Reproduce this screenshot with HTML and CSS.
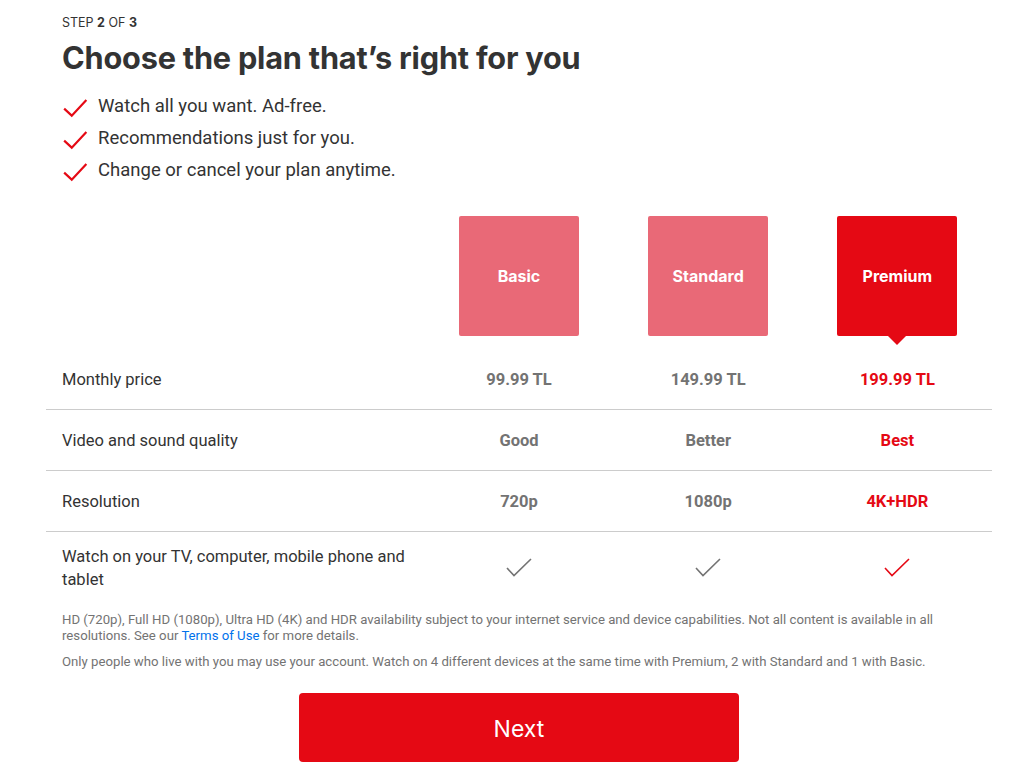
FILE: index.html
```html
<!DOCTYPE html>
<html lang="en">
<head>
<meta charset="utf-8">
<title>Choose your plan</title>
<link rel="stylesheet" href="styles.css">
</head>
<body>
<main class="page">
  <header class="intro">
    <div class="step">STEP <b>2</b> OF <b>3</b></div>
    <h1 class="title">Choose the plan that’s right for you</h1>
    <ul class="perks">
      <li class="perk"><svg class="perk-check" viewBox="0 0 24 24" width="26" height="26"><path d="M2 13.5 L9 20 L22.5 5.5" fill="none" stroke="#e50914" stroke-width="2"/></svg><span>Watch all you want. Ad-free.</span></li>
      <li class="perk"><svg class="perk-check" viewBox="0 0 24 24" width="26" height="26"><path d="M2 13.5 L9 20 L22.5 5.5" fill="none" stroke="#e50914" stroke-width="2"/></svg><span>Recommendations just for you.</span></li>
      <li class="perk"><svg class="perk-check" viewBox="0 0 24 24" width="26" height="26"><path d="M2 13.5 L9 20 L22.5 5.5" fill="none" stroke="#e50914" stroke-width="2"/></svg><span>Change or cancel your plan anytime.</span></li>
    </ul>
  </header>

  <section class="plans">
    <div class="plan-head">
      <div class="spacer"></div>
      <div class="plan-cell"><div class="plan-box">Basic</div></div>
      <div class="plan-cell"><div class="plan-box">Standard</div></div>
      <div class="plan-cell"><div class="plan-box selected">Premium</div></div>
    </div>

    <div class="row">
      <div class="label">Monthly price</div>
      <div class="val">99.99 TL</div>
      <div class="val">149.99 TL</div>
      <div class="val sel">199.99 TL</div>
    </div>
    <div class="row">
      <div class="label">Video and sound quality</div>
      <div class="val">Good</div>
      <div class="val">Better</div>
      <div class="val sel">Best</div>
    </div>
    <div class="row">
      <div class="label">Resolution</div>
      <div class="val">720p</div>
      <div class="val">1080p</div>
      <div class="val sel">4K+HDR</div>
    </div>
    <div class="row last">
      <div class="label">Watch on your TV, computer, mobile phone and tablet</div>
      <div class="val"><svg viewBox="0 0 26 20" width="26" height="20"><path d="M1 10 L8 17.5 L25 1" fill="none" stroke="#737373" stroke-width="1.6"/></svg></div>
      <div class="val"><svg viewBox="0 0 26 20" width="26" height="20"><path d="M1 10 L8 17.5 L25 1" fill="none" stroke="#737373" stroke-width="1.6"/></svg></div>
      <div class="val"><svg viewBox="0 0 26 20" width="26" height="20"><path d="M1 10 L8 17.5 L25 1" fill="none" stroke="#e50914" stroke-width="1.6"/></svg></div>
    </div>
  </section>

  <div class="notes">
    <p class="note">HD (720p), Full HD (1080p), Ultra HD (4K) and HDR availability subject to your internet service and device capabilities. Not all content is available in all resolutions. See our <a href="#" class="link">Terms of Use</a> for more details.</p>
    <p class="note">Only people who live with you may use your account. Watch on 4 different devices at the same time with Premium, 2 with Standard and 1 with Basic.</p>
  </div>

  <div class="actions">
    <button class="next" type="button">Next</button>
  </div>
</main>
</body>
</html>
```

FILE: styles.css
```css
* { box-sizing: border-box; }
html, body { margin: 0; padding: 0; background: #fff; }
body {
  font-family: Roboto, "Liberation Sans", Arial, sans-serif;
  color: #333;
}
.page {
  width: 946px;
  margin-left: 46px;
  padding-top: 14px;
}
.intro { padding: 0 16px; }
.step {
  font-family: Inter, Roboto, sans-serif;
  font-size: 12.5px;
  line-height: 18px;
  color: #333;
}
.step b { font-weight: 700; }
.title {
  margin: 6px 0 0;
  font-family: Inter, Roboto, sans-serif;
  font-size: 30.7px;
  line-height: 40px;
  font-weight: 700;
  color: #333;
  letter-spacing: -0.2px;
}
.perks {
  list-style: none;
  margin: 12px 0 0;
  padding: 0;
}
.perk {
  display: flex;
  align-items: center;
  gap: 10px;
  height: 32px;
  font-size: 18.5px;
  color: #333;
}
.perk-check { flex: none; margin-top: 2px; }

.plans { margin-top: 30px; }
.plan-head {
  display: grid;
  grid-template-columns: 40% 20% 20% 20%;
  height: 133px;
}
.plan-cell { display: flex; justify-content: center; }
.plan-box {
  position: relative;
  width: 120px;
  height: 120px;
  border-radius: 2px;
  background: #e96977;
  color: #fff;
  font-family: Inter, Roboto, sans-serif;
  font-size: 16px;
  font-weight: 700;
  display: flex;
  align-items: center;
  justify-content: center;
}
.plan-box.selected { background: #e50914; }
.plan-box.selected::after {
  content: "";
  position: absolute;
  left: 50%;
  top: 100%;
  margin-left: -9px;
  border-left: 9px solid transparent;
  border-right: 9px solid transparent;
  border-top: 9px solid #e50914;
}

.row {
  display: grid;
  grid-template-columns: 40% 20% 20% 20%;
  align-items: center;
  min-height: 61px;
  border-bottom: 1px solid #ccc;
}
.row.last {
  border-bottom: 0;
  min-height: 0;
  padding: 13px 0 21px;
}
.label {
  padding: 0 16px;
  font-size: 16.5px;
  line-height: 23px;
  color: #333;
}
.row.last .label { padding-right: 10px; }
.val {
  text-align: center;
  font-size: 16.5px;
  font-weight: 700;
  color: #737373;
}
.val svg { display: inline-block; vertical-align: middle; }
.val.sel { color: #e50914; }

.notes { padding: 0 16px; }
.note {
  margin: 0 0 10px;
  font-size: 13.2px;
  line-height: 16px;
  color: #737373;
}
.link { color: #0071eb; text-decoration: none; }

.actions {
  display: flex;
  justify-content: center;
  padding-top: 13px;
}
.next {
  width: 440px;
  height: 69px;
  border: 0;
  border-radius: 4px;
  padding: 3px 0 0;
  background: #e50914;
  color: #fff;
  font-family: Inter, Roboto, sans-serif;
  font-size: 23px;
  font-weight: 400;
  cursor: pointer;
}
```
